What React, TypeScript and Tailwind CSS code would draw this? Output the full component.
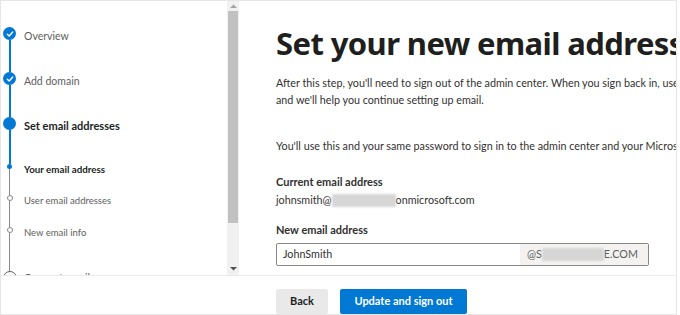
import React from "react";

const font = { fontFamily: 'Lato, "Noto Sans", sans-serif' };
const headFont = { fontFamily: '"Noto Sans", Lato, sans-serif' };

function CheckCircle() {
  return (
    <div className="w-[13px] h-[13px] shrink-0 rounded-full bg-[#0078d4] flex items-center justify-center">
      <svg width="8" height="8" viewBox="0 0 8 8">
        <path d="M1.3 4.2 L3.2 6 L6.7 2" stroke="white" strokeWidth="1.4" fill="none" strokeLinecap="round" strokeLinejoin="round" />
      </svg>
    </div>
  );
}

function Blur({ w }: { w: number }) {
  return <span className="inline-block h-[13px] bg-[#d6d6d6] blur-[1px]" style={{ width: w }} />;
}

function StepRow({ icon, h, children }: { icon: React.ReactNode; h: number; children: React.ReactNode }) {
  return (
    <div className="flex items-center shrink-0" style={{ height: h }}>
      <div className="w-[17px] flex justify-center shrink-0">{icon}</div>
      <div className="pl-[6px] whitespace-nowrap">{children}</div>
    </div>
  );
}

function Line({ h, blue }: { h: number; blue?: boolean }) {
  return (
    <div className="w-[17px] flex justify-center shrink-0" style={{ height: h }}>
      <div className={blue ? "w-[2px] h-full bg-[#0078d4]" : "w-[1px] h-full bg-[#8a8886]"} />
    </div>
  );
}

export default function App() {
  return (
    <div className="w-[680px] h-[315px] bg-white overflow-hidden text-[#323130]" style={font}>
      <div className="w-[677px] h-[315px] border border-[#e6e6e6] flex flex-col overflow-hidden">
        <div className="flex h-[275px] shrink-0 border-b border-[#ebebeb]">
          {/* left nav */}
          <div className="w-[226px] overflow-hidden flex flex-col pt-[26px]">
            <StepRow h={13} icon={<CheckCircle />}>
              <span className="text-[10.5px] text-[#605e5c]">Overview</span>
            </StepRow>
            <Line h={32} blue />
            <StepRow h={13} icon={<CheckCircle />}>
              <span className="text-[10.5px] text-[#605e5c]">Add domain</span>
            </StepRow>
            <Line h={32} blue />
            <StepRow h={13} icon={<div className="w-[13px] h-[13px] rounded-full bg-[#0078d4]" />}>
              <span className="text-[11px] font-bold text-[#201f1e]">Set email addresses</span>
            </StepRow>
            <Line h={34} blue />
            <StepRow h={5} icon={<div className="w-[5px] h-[5px] rounded-full bg-[#0078d4]" />}>
              <span className="text-[9.75px] font-bold text-[#201f1e]">Your email address</span>
            </StepRow>
            <Line h={26} />
            <StepRow h={6} icon={<div className="w-[6px] h-[6px] rounded-full border border-[#8a8886] bg-white" />}>
              <span className="text-[9.5px] text-[#605e5c]">User email addresses</span>
            </StepRow>
            <Line h={26} />
            <StepRow h={6} icon={<div className="w-[6px] h-[6px] rounded-full border border-[#8a8886] bg-white" />}>
              <span className="text-[9.5px] text-[#605e5c]">New email info</span>
            </StepRow>
            <Line h={38} />
            <StepRow h={14} icon={<div className="w-[14px] h-[14px] rounded-full border border-[#605e5c] bg-white" />}>
              <span className="text-[10.5px] text-[#605e5c] relative -top-[2px]">Connect email</span>
            </StepRow>
          </div>

          {/* scrollbar */}
          <div className="w-[12px] bg-[#f1f1f1] flex flex-col items-center">
            <svg width="7" height="5" viewBox="0 0 7 5" className="mt-[3px]">
              <path d="M0 4 L3.5 0.5 L7 4 Z" fill="#a3a3a3" />
            </svg>
            <div className="w-[10px] h-[212px] bg-[#c1c1c1] mt-[2px]" />
            <div className="flex-1" />
            <svg width="7" height="5" viewBox="0 0 7 5" className="mb-[4px]">
              <path d="M0 1 L3.5 4.5 L7 1 Z" fill="#505050" />
            </svg>
          </div>

          {/* main */}
          <div className="flex-1 pl-[37px] overflow-hidden whitespace-nowrap">
            <h1 className="text-[31px] font-bold text-[#201f1e] leading-none mt-[27px] tracking-[-0.6px]" style={headFont}>
              Set your new email address
            </h1>
            <p className="text-[10.75px] leading-[17px] mt-[15px]">
              After this step, you'll need to sign out of the admin center. When you sign back in, use your new email address
              <br />
              and we'll help you continue setting up email.
            </p>
            <p className="text-[10.75px] leading-[17px] mt-[29px]">
              You'll use this and your same password to sign in to the admin center and your Microsoft 365 apps.
            </p>
            <div className="text-[11px] font-bold mt-[20px] leading-[16px]">Current email address</div>
            <div className="text-[10.75px] mt-[2px] leading-[16px] flex items-center">
              <span>johnsmith@</span>
              <Blur w={64} />
              <span>onmicrosoft.com</span>
            </div>
            <div className="text-[11px] font-bold mt-[14px] leading-[16px]">New email address</div>
            <div className="mt-[5px] w-[373px] h-[23px] border border-[#8a8886] rounded-[2px] flex text-[10.75px]">
              <div className="flex-1 pl-[6px] flex items-center">JohnSmith</div>
              <div className="w-[128px] bg-[#f3f2f1] pl-[7px] flex items-center text-[#605e5c]">
                <span>@S</span>
                <Blur w={62} />
                <span>E.COM</span>
              </div>
            </div>
          </div>
        </div>

        {/* footer */}
        <div className="flex-1 flex items-start pt-[13px] pl-[275px] gap-[12px]">
          <button className="w-[52px] h-[25px] bg-[#e9e9e9] text-[11px] font-bold text-[#201f1e] rounded-[2px]">Back</button>
          <button className="w-[127px] h-[25px] bg-[#0078d4] text-[11px] font-bold text-white rounded-[2px]">Update and sign out</button>
        </div>
      </div>
    </div>
  );
}
